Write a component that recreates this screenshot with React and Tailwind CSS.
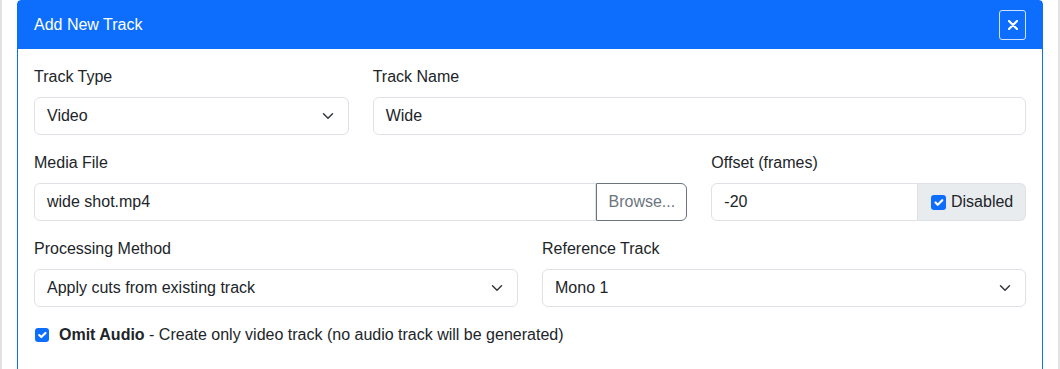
import React from 'react';

const font = { fontFamily: '"Liberation Sans", Arial, sans-serif' };

const Chevron = () => (
  <svg className="w-4 h-3" viewBox="0 0 16 16" fill="none">
    <path d="m2 5 6 6 6-6" stroke="#343a40" strokeWidth="2" strokeLinecap="round" strokeLinejoin="round" />
  </svg>
);

const Check = ({ size = 'w-[14px] h-[14px]' }) => (
  <span className={`inline-flex ${size} items-center justify-center rounded-[3px] bg-[#0d6efd] shrink-0`}>
    <svg className="w-full h-full" viewBox="0 0 20 20" fill="none">
      <path d="m6 10 3 3 6-6" stroke="#fff" strokeWidth="3" strokeLinecap="round" strokeLinejoin="round" />
    </svg>
  </span>
);

const Label = ({ children }) => <div className="mb-2 leading-6 text-[#212529]">{children}</div>;

const Select = ({ value }) => (
  <div className="flex h-[38px] items-center justify-between rounded-md border border-[#dee2e6] bg-white pl-3 pr-3 text-[#212529]">
    <span>{value}</span>
    <Chevron />
  </div>
);

const Input = ({ value, className = '' }) => (
  <div className={`flex h-[38px] items-center border border-[#dee2e6] bg-white px-3 text-[#212529] ${className}`}>
    {value}
  </div>
);

export default function App() {
  return (
    <div className="w-[1060px] h-[369px] overflow-hidden bg-white border-x-2 border-[#e2e2e2] text-base" style={font}>
      <div className="ml-[15px] w-[1026px] h-[380px] border border-[#0d6efd] rounded-t-[4px] bg-white">
        {/* Header */}
        <div className="flex h-[48px] items-center justify-between bg-[#0d6efd] pl-4 pr-4">
          <h5 className="text-white text-base leading-6">Add New Track</h5>
          <button className="flex w-[27px] h-[30px] items-center justify-center rounded-[3px] border border-white/80 text-white">
            <svg className="w-[10px] h-[10px]" viewBox="0 0 10 10" fill="none">
              <path d="M1 1l8 8M9 1 1 9" stroke="#fff" strokeWidth="2.2" strokeLinecap="round" />
            </svg>
          </button>
        </div>

        {/* Body */}
        <div className="px-4 pt-4">
          <div className="grid grid-cols-12 gap-x-6">
            <div className="col-span-4 mb-4">
              <Label>Track Type</Label>
              <Select value="Video" />
            </div>
            <div className="col-span-8 mb-4">
              <Label>Track Name</Label>
              <Input value="Wide" className="rounded-md" />
            </div>

            <div className="col-span-8 mb-4">
              <Label>Media File</Label>
              <div className="flex">
                <Input value="wide shot.mp4" className="flex-1 rounded-l-md" />
                <button className="h-[38px] w-[91px] rounded-r-md border border-[#6c757d] text-[#6c757d]">Browse...</button>
              </div>
            </div>
            <div className="col-span-4 mb-4">
              <Label>Offset (frames)</Label>
              <div className="flex">
                <Input value="-20" className="flex-1 rounded-l-md" />
                <div className="flex h-[38px] w-[108px] items-center gap-[5px] rounded-r-md border border-l-0 border-[#dee2e6] bg-[#e9ecef] pl-[13px] text-[#212529]">
                  <Check size="w-[15px] h-[15px]" />
                  <span>Disabled</span>
                </div>
              </div>
            </div>

            <div className="col-span-6 mb-4">
              <Label>Processing Method</Label>
              <Select value="Apply cuts from existing track" />
            </div>
            <div className="col-span-6 mb-4">
              <Label>Reference Track</Label>
              <Select value="Mono 1" />
            </div>
          </div>

          <div className="flex items-center gap-[10px] pl-px leading-6 text-[#212529]">
            <Check />
            <span>
              <strong className="font-bold">Omit Audio</strong> - Create only video track (no audio track will be generated)
            </span>
          </div>
        </div>
      </div>
    </div>
  );
}
